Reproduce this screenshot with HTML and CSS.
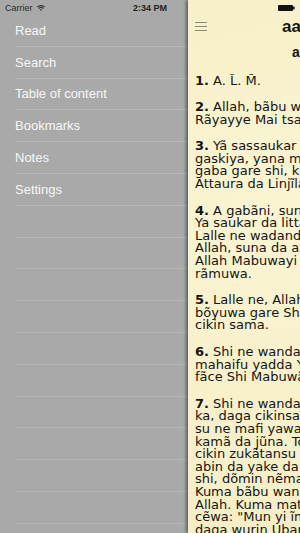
FILE: index.html
```html
<html>

<head>
  <meta name="viewport" content="width=device-width, initial-scale=1">
  <link rel="stylesheet" href="styles.css">
</head>

<body>
  <div class="statusbar">
    <span class="carrier">Carrier
      <svg class="wifi" width="8" height="6" viewBox="0 0 8 6">
        <path d="M0.4 2.2 A5 5 0 0 1 7.6 2.2" fill="none" stroke="#2a2a2a" stroke-width="1.1" />
        <path d="M1.7 3.5 A3.2 3.2 0 0 1 6.3 3.5" fill="none" stroke="#2a2a2a" stroke-width="1.1" />
        <path d="M4 6 L2.9 4.8 A1.6 1.6 0 0 1 5.1 4.8 Z" fill="#2a2a2a" />
      </svg>
    </span>
    <span class="clock">2:34 PM</span>
    <svg class="battery" width="17" height="6" viewBox="0 0 17 6">
      <rect x="0" y="0" width="15" height="6" rx="1" fill="#111" />
      <rect x="15" y="1.6" width="1.6" height="2.8" fill="#111" />
    </svg>
  </div>

  <div class="screen">
    <nav class="menu">
      <ul>
        <li>Read</li>
        <li>Search</li>
        <li>Table of content</li>
        <li>Bookmarks</li>
        <li>Notes</li>
        <li>Settings</li>
        <li></li>
        <li></li>
        <li></li>
        <li></li>
        <li></li>
        <li></li>
        <li></li>
        <li></li>
        <li></li>
        <li></li>
        <li></li>
      </ul>
    </nav>

    <main class="reader">
      <div class="reader-head">
        <svg class="menu-toggle" width="12" height="10" viewBox="0 0 12 10">
          <path d="M0 0.5 H12 M0 4.5 H12 M0 8.5 H12" stroke="#8c8a80" stroke-width="1" />
        </svg>
        <span class="title">aa</span>
      </div>
      <div class="subtitle">a</div>

      <div class="verses">
        <p class="verse"><b>1.</b> A. L&#x303;. M&#x303;.</p>
        <p class="verse"><b>2.</b> Allah, bãbu wani abin bautãwa fãce Shi,<br>Rãyayye Mai tsayuwa da kõme.</p>
        <p class="verse"><b>3.</b> Yã sassaukar da Littãfi a kanka da<br>gaskiya, yana mai gaskatãwa ga abin da ke a<br>gaba gare shi, kuma Ya saukar da<br>Attaura da Linjĩla.</p>
        <p class="verse"><b>4.</b> A gabãni, suna shiriya ga mutãne.<br>Ya saukar da littafi mai rarrabẽwa.<br>Lalle ne wadanda suka kãfirta da ãyõyin<br>Allah, suna da azãba mai tsanani. Kuma<br>Allah Mabuwayi ne, Ma'abũcin<br>rãmuwa.</p>
        <p class="verse"><b>5.</b> Lalle ne, Allah bã wani abu da yake<br>bõyuwa gare Shi a cikin ƙasa, kuma bã a<br>cikin sama.</p>
        <p class="verse"><b>6.</b> Shi ne wanda Yake suranta ku a cikin<br>mahaifu yadda Yake so. Bãbu abin bautawa<br>fãce Shi Mabuwãyi, Mai hikima.</p>
        <p class="verse"><b>7.</b> Shi ne wanda Ya saukar da Littãfi a gare<br>ka, daga cikinsa akwai ãyõyi bayyanannu,<br>su ne mafi yawan Littãfin, da wasu mãsu<br>kamã da jũna. To, amma waɗanda yake a<br>cikin zukãtansu akwai karkata, sai sunã bin<br>abin da yake da kamã da juna daga gare<br>shi, dõmin nẽman fitina da nẽman tãwĩlinsa.<br>Kuma bãbu wanda ya san tãwĩlinsa face<br>Allah. Kuma matabbata a cikin ilmi sunã<br>cẽwa: "Mun yi ĩmãni da shi, duka<br>daga wurin Ubangijinmu yake."</p>
      </div>
    </main>
  </div>
</body>

</html>
```

FILE: styles.css
```css
html,
body {
  margin: 0;
  height: 100%;
  overflow: hidden;
  background: #a9a9a9;
  font-family: "Liberation Sans", Arial, sans-serif;
}

.statusbar {
  position: absolute; /* sits over both panels */
  top: 0;
  left: 0;
  right: 0;
  height: 15px;
  padding: 0 5px;
  display: grid;
  grid-template-columns: 1fr auto 1fr;
  align-items: center;
  font-size: 9px;
  color: #2a2a2a;
  z-index: 2;
}

.carrier {
  display: flex;
  align-items: center;
  gap: 4px;
}

.clock {
  font-weight: bold;
  color: #222;
}

.battery {
  justify-self: end;
}

.screen {
  display: flex;
  height: 533px;
}

.menu {
  width: 188px;
  flex-shrink: 0;
  padding-top: 15px;
  background: #a9a9a9;
}

.menu ul {
  list-style: none;
  margin: 0;
  padding: 0 0 0 15px;
}

.menu li {
  height: 30.8px;
  border-bottom: 1px solid #b7b7b7;
  display: flex;
  align-items: center;
  font-size: 13px;
  color: #f7f7f7;
}

.reader {
  width: 300px;
  flex-shrink: 0;
  padding: 17px 0 0 7px;
  background: #f7efc8;
  background-image: radial-gradient(circle at 30% 40%, rgba(255, 250, 220, 0.5), rgba(240, 228, 180, 0.2));
  box-shadow: -2px 0 3px rgba(0, 0, 0, 0.45);
  color: #151515;
}

.reader-head {
  display: flex;
  align-items: center;
  height: 20px;
}

.title {
  margin-left: 75px;
  font-size: 17px;
  font-weight: bold;
}

.subtitle {
  margin: 7px 0 0 97px;
  font-size: 14px;
  line-height: 16px;
  font-weight: bold;
}

.verses {
  margin-top: 14.5px;
  font-family: "DejaVu Sans", Verdana, sans-serif;
  font-size: 13px;
  line-height: 12.6px;
}

.verse {
  margin: 0 0 14px;
  white-space: nowrap;
}
```
